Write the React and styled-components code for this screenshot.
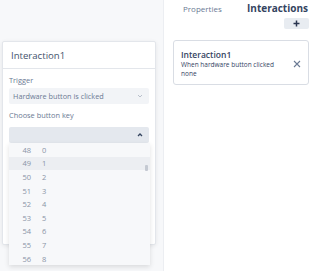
import React from "react";
import styled, { createGlobalStyle } from "styled-components";

const Global = createGlobalStyle`
  html, body { margin: 0; padding: 0; }
  body { font-family: "Open Sans", "Noto Sans", sans-serif; background: #f7f8fa; overflow: hidden; }
`;

const Page = styled.div`
  display: flex;
  width: 314px;
  height: 271px;
`;

const Canvas = styled.div`
  position: relative;
  width: 163px;
  background: #f7f8fa;
  padding: 41px 0 0 2px;
  box-sizing: border-box;
`;

const Side = styled.div`
  flex: 1;
  background: #fff;
  box-shadow: -2px 0 3px rgba(0,0,0,0.05);
  border-left: 1px solid #eceef2;
  display: flex;
  flex-direction: column;
  padding: 0 5px 0 9px;
`;

const Tabs = styled.div`
  display: flex;
  align-items: baseline;
  justify-content: space-between;
  padding: 1px 1px 0 10px;
`;

const Tab = styled.div`
  font-size: ${p => (p.$active ? "10px" : "8px")};
  font-weight: ${p => (p.$active ? 700 : 400)};
  color: ${p => (p.$active ? "#34445f" : "#6b7a94")};
`;

const AddRow = styled.div`
  display: flex;
  justify-content: flex-end;
  margin-top: 3px;
`;

const AddButton = styled.div`
  width: 25px;
  height: 11px;
  background: #e8ecf1;
  border-radius: 2px;
  display: flex;
  align-items: center;
  justify-content: center;
`;

const Card = styled.div`
  margin-top: 11px;
  border: 1px solid #d9dde4;
  border-radius: 3px;
  padding: 8px 7px 6px 7px;
  display: flex;
  align-items: center;
  justify-content: space-between;
`;

const CardTitle = styled.div`
  font-size: 8.5px;
  font-weight: 600;
  color: #34445f;
  line-height: 11px;
`;

const CardSub = styled.div`
  font-size: 6.5px;
  color: #34445f;
  line-height: 9px;
`;

const Popover = styled.div`
  width: 154px;
  height: 204px;
  background: #fff;
  border: 1px solid #e3e6eb;
  box-shadow: 0 1px 4px rgba(0,0,0,0.08);
  box-sizing: border-box;
  border-radius: 2px;
`;

const PopHeader = styled.div`
  height: 26px;
  border-bottom: 1px solid #e3e6eb;
  display: flex;
  align-items: center;
  padding-left: 8px;
  font-size: 9.6px;
  color: #44536d;
`;

const PopBody = styled.div`
  padding: 6px 6px 0 6px;
  display: flex;
  flex-direction: column;
`;

const Label = styled.div`
  font-size: 7.4px;
  color: #6b7a94;
  line-height: 11px;
  margin-bottom: ${p => p.$mb || "2px"};
`;

const Select = styled.div`
  height: 16px;
  border-radius: 2px;
  background: ${p => (p.$open ? "#e4e8ee" : "#f2f4f7")};
  display: flex;
  align-items: center;
  justify-content: space-between;
  padding: 0 6px 0 4px;
  font-size: 7.3px;
  color: #6b7a94;
  margin-bottom: ${p => p.$mb || "0"};
`;

const List = styled.div`
  position: absolute;
  left: 9px;
  top: 143px;
  width: 141px;
  height: 122px;
  background: #f7f8fa;
  box-shadow: 0 2px 5px rgba(0,0,0,0.12);
  overflow: hidden;
`;

const Row = styled.div`
  height: 13.6px;
  display: flex;
  align-items: center;
  font-size: 7.5px;
  color: #8a94a6;
  background: ${p => (p.$hl ? "#eceef2" : "transparent")};
`;

const Code = styled.span`
  width: 22px;
  text-align: right;
`;

const Char = styled.span`
  margin-left: 11px;
`;

const Thumb = styled.div`
  position: absolute;
  right: 2px;
  top: 22px;
  width: 3px;
  height: 6px;
  border-radius: 1px;
  background: #c4c9d2;
`;

const rows = [48, 49, 50, 51, 52, 53, 54, 55, 56];

export default function App() {
  return (
    <>
      <Global />
      <Page>
        <Canvas>
          <Popover>
            <PopHeader>Interaction1</PopHeader>
            <PopBody>
              <Label>Trigger</Label>
              <Select $mb="6px">
                <span>Hardware button is clicked</span>
                <svg width="6" height="4" viewBox="0 0 6 4">
                  <path d="M1 1l2 2 2-2" fill="none" stroke="#aab2bf" strokeWidth="0.8" />
                </svg>
              </Select>
              <Label $mb="6px">Choose button key</Label>
              <Select $open>
                <span />
                <svg width="6" height="4" viewBox="0 0 6 4">
                  <path d="M1 3l2-2 2 2" fill="none" stroke="#34445f" strokeWidth="1.3" />
                </svg>
              </Select>
            </PopBody>
          </Popover>
          <List>
            {rows.map((n, i) => (
              <Row key={n} $hl={n === 49}>
                <Code>{n}</Code>
                <Char>{i}</Char>
              </Row>
            ))}
            <Thumb />
          </List>
        </Canvas>
        <Side>
          <Tabs>
            <Tab>Properties</Tab>
            <Tab $active>Interactions</Tab>
          </Tabs>
          <AddRow>
            <AddButton>
              <svg width="7" height="7" viewBox="0 0 7 7">
                <path d="M3.5 0.5v6M0.5 3.5h6" stroke="#2a3650" strokeWidth="1.5" />
              </svg>
            </AddButton>
          </AddRow>
          <Card>
            <div>
              <CardTitle>Interaction1</CardTitle>
              <CardSub>When hardware button clicked</CardSub>
              <CardSub>none</CardSub>
            </div>
            <svg width="8" height="8" viewBox="0 0 8 8">
              <path d="M1 1l6 6M7 1l-6 6" stroke="#6b7a94" strokeWidth="1.1" />
            </svg>
          </Card>
        </Side>
      </Page>
    </>
  );
}
